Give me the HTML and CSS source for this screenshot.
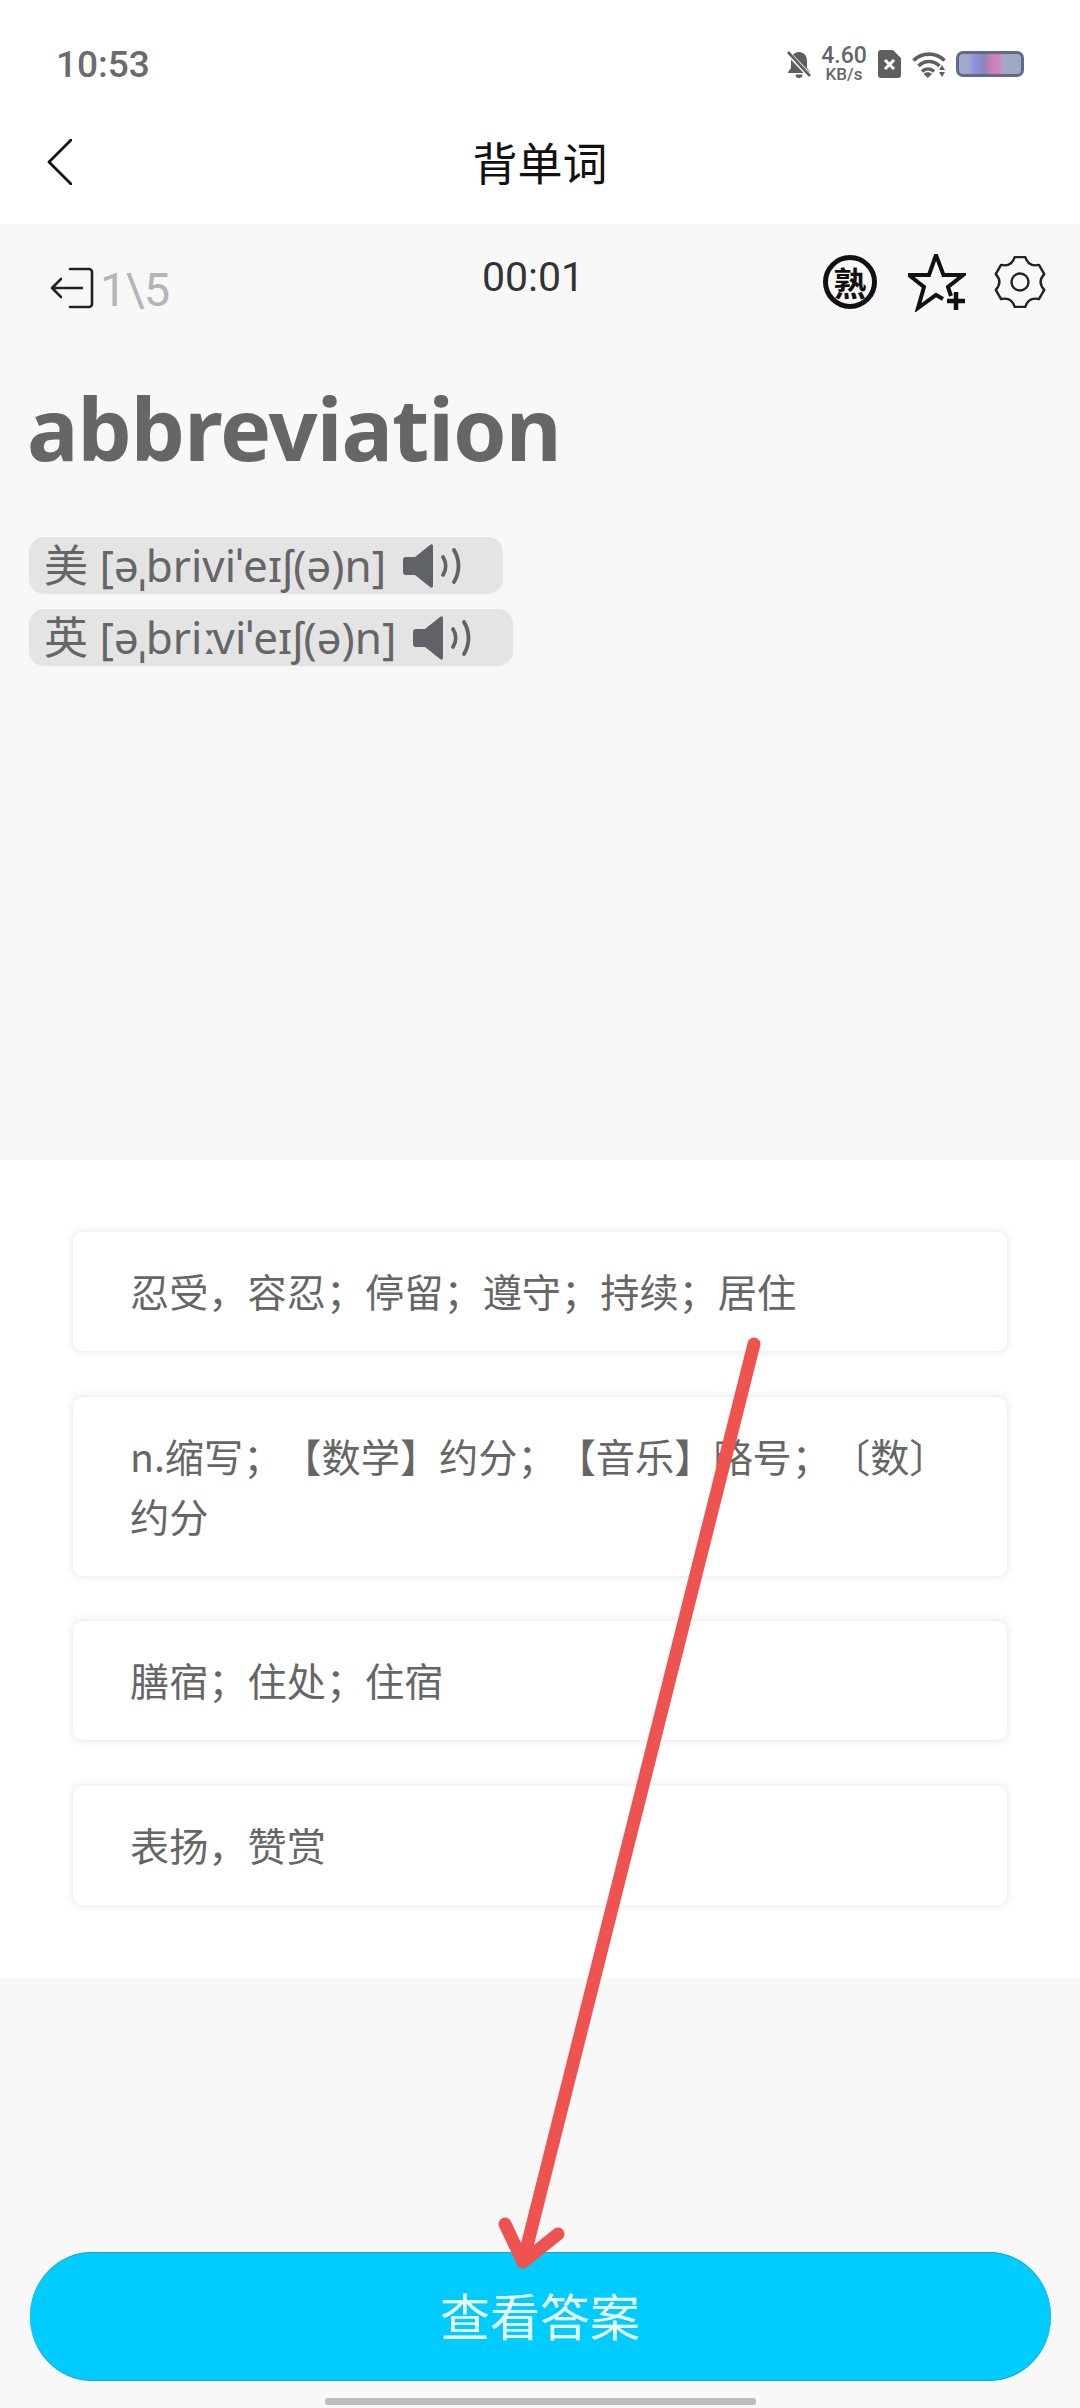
FILE: index.html
```html
<!DOCTYPE html>
<html lang="zh">
<head>
<meta charset="utf-8">
<title>背单词</title>
<link rel="stylesheet" href="styles.css">
</head>
<body>
<div class="page">
  <div class="status">
    <span class="time">10:53</span>
    <div class="status-icons">
      <svg class="i-bell" viewBox="0 0 24 27"><path d="M12 1c-5 0-8 4-8 9v7l-3 4v1h22v-1l-3-4v-7c0-5-3-9-8-9z M8.500 23.500h7a3.500 3.500 0 0 1-7 0z" fill="#5f5f5f"/><path d="M1 2l22 23" stroke="#fff" stroke-width="5"/><path d="M1 1l22 24" stroke="#5f5f5f" stroke-width="2.600"/></svg>
      <div class="speed"><span class="speed-num">4.60</span><span class="speed-unit">KB/s</span></div>
      <svg class="i-sim" viewBox="0 0 23 28"><path d="M3 0h11a2 2 0 0 1 1.500.6l6.900 7a2 2 0 0 1 .6 1.400v16a3 3 0 0 1-3 3H3a3 3 0 0 1-3-3V3a3 3 0 0 1 3-3z" fill="#5f5f5f"/><path d="M7 10l9 9M16 10l-9 9" stroke="#fff" stroke-width="3"/></svg>
      <svg class="i-wifi" viewBox="0 0 34 27"><path d="M1.500 9.500C10 1 24 1 32.500 9.500" fill="none" stroke="#5f5f5f" stroke-width="3.600"/><path d="M6.500 15c6-6 15-6 21 0" fill="none" stroke="#5f5f5f" stroke-width="3.600"/><path d="M11 20.500c3.500-3.500 8.500-3.500 12 0" fill="none" stroke="#5f5f5f" stroke-width="3.400" transform="translate(-1 0)"/><path d="M11.500 23c2.500-2.200 6-2.200 8.500 0l-4.200 4z" fill="#5f5f5f"/><path d="M30 14l3 5h-6zM27 21h6l-3 5z" fill="#5f5f5f"/></svg>
      <div class="battery"></div>
    </div>
  </div>

  <div class="nav">
    <svg class="i-back" viewBox="0 0 25 46"><path d="M24 1L2 23l22 22" fill="none" stroke="#111" stroke-width="2.800" stroke-linecap="round" stroke-linejoin="round"/></svg>
    <h1 class="title">背单词</h1>
  </div>

  <section class="study">
    <div class="tools">
      <div class="progress">
        <svg class="i-exit" viewBox="0 0 44 42"><path d="M20 2h19a3 3 0 0 1 3 3v32a3 3 0 0 1-3 3H20M32 21H2M11 12l-9 9 9 9" fill="none" stroke="#222" stroke-width="2.600" stroke-linecap="round" stroke-linejoin="round"/></svg>
        <span class="count">1\5</span>
      </div>
      <span class="timer">00:01</span>
      <div class="actions">
        <span class="known">熟</span>
        <svg class="i-star" viewBox="0 0 58 58"><path d="M35 45L28 41L10 54L16 33L1 21H21L28 1L35.500 21H55L40 33L43 42" fill="none" stroke="#111" stroke-width="4" stroke-linejoin="miter"/><path d="M48 38v18M39 47h18" stroke="#111" stroke-width="4.500" fill="none"/></svg>
        <svg class="i-gear" viewBox="-27 -27 54 54"><path d="M-5.300-24.900H5.300Q8.500-14.700 18.950-17.060L24.250-7.880Q17 0 24.250 7.880L18.950 17.060Q8.500 14.700 5.300 24.900H-5.300Q-8.500 14.700-18.950 17.060L-24.250 7.880Q-17 0-24.250-7.880L-18.950-17.060Q-8.500-14.700-5.300-24.900Z" fill="none" stroke="#222" stroke-width="2.400" stroke-linejoin="round"/><circle r="8.500" fill="none" stroke="#222" stroke-width="2.400"/></svg>
      </div>
    </div>
    <h2 class="word">abbreviation</h2>
    <div class="phonetics">
      <div class="pill">
        <span class="pill-text">美 [əˌbriviˈeɪʃ(ə)n]</span>
        <svg class="i-speaker" viewBox="0 0 58 46"><path d="M3 14h9L27 2c2-1.500 3-.5 3 1.500v39c0 2-1 3-3 1.500L12 32H3a3 3 0 0 1-3-3V17a3 3 0 0 1 3-3z" fill="#5f6368"/><path d="M40 14c3.500 5.500 3.500 12.500 0 18M51 7c6 10 6 22 0 32" fill="none" stroke="#5f6368" stroke-width="3.800" stroke-linecap="round"/></svg>
      </div>
      <div class="pill">
        <span class="pill-text">英 [əˌbri<span class="length">ː</span>viˈeɪʃ(ə)n]</span>
        <svg class="i-speaker" viewBox="0 0 58 46"><path d="M3 14h9L27 2c2-1.500 3-.5 3 1.500v39c0 2-1 3-3 1.500L12 32H3a3 3 0 0 1-3-3V17a3 3 0 0 1 3-3z" fill="#5f6368"/><path d="M40 14c3.500 5.500 3.500 12.500 0 18M51 7c6 10 6 22 0 32" fill="none" stroke="#5f6368" stroke-width="3.800" stroke-linecap="round"/></svg>
      </div>
    </div>
  </section>

  <section class="options">
    <div class="card">忍受，容忍；停留；遵守；持续；居住</div>
    <div class="card">n.缩写；【数学】约分；【音乐】略号；〔数〕约分</div>
    <div class="card">膳宿；住处；住宿</div>
    <div class="card">表扬，赞赏</div>
  </section>

  <div class="footer">
    <button class="answer">查看答案</button>
    <div class="home-bar"></div>
  </div>

  <svg class="arrow" viewBox="0 0 1080 2408"><path d="M754 1344L523 2262M505 2224L523 2262L558 2234" fill="none" stroke="#ef5350" stroke-width="13" stroke-linecap="round" stroke-linejoin="round"/></svg>
</div>
</body>
</html>
```

FILE: styles.css
```css
* { box-sizing: border-box; }
html, body { margin: 0; padding: 0; }
body {
  background: #fff;
  font-family: "Noto Sans", "Noto Sans CJK SC", sans-serif;
  text-spacing-trim: space-all;
}
.page {
  position: relative;
  width: 1080px;
  height: 2408px;
  display: flex;
  flex-direction: column;
  overflow: hidden;
}

/* status bar */
.status {
  height: 96px;
  flex: none;
  display: flex;
  align-items: flex-start;
  justify-content: space-between;
  padding: 44px 56px 0 56px;
}
.time {
  font-family: Roboto, sans-serif;
  font-size: 37px;
  line-height: 42px;
  font-weight: 500;
  color: #6b6b6b;
}
.status-icons {
  display: flex;
  align-items: center;
  margin-top: 1px;
}
.i-bell { width: 24px; height: 27px; margin-right: 9px; }
.speed {
  width: 48px;
  display: flex;
  flex-direction: column;
  align-items: center;
  margin-right: 10px;
  font-family: Roboto, sans-serif;
  font-weight: 500;
  color: #666;
}
.speed-num { font-size: 23px; line-height: 21px; }
.speed-unit { font-size: 17px; line-height: 17px; }
.i-sim { width: 23px; height: 28px; margin-right: 11px; }
.i-wifi { width: 34px; height: 27px; margin-right: 10px; }
.battery {
  width: 68px;
  height: 26px;
  border: 3px solid #5f6b88;
  border-radius: 7px;
  background: linear-gradient(90deg, #a0a8cc 0%, #a0a8cc 14%, #8d8ee6 26%, #8e8cd8 32%, #8d83b8 40%, #d77cb8 56%, #c889b8 66%, #a0a8c8 72%, #a0a8c8 100%);
}

/* nav */
.nav {
  height: 128px;
  flex: none;
  display: flex;
  align-items: center;
  justify-content: center;
  position: relative;
}
.i-back {
  width: 25px;
  height: 46px;
  position: absolute;
  left: 47px;
  top: 43px;
}
.title {
  margin: 3px 0 0;
  font-family: "Noto Sans CJK SC", sans-serif;
  font-size: 45px;
  line-height: 60px;
  font-weight: 400;
  color: #111;
}

/* study area */
.study {
  height: 936px;
  flex: none;
  background: #f8f8f9;
  padding-top: 30px;
}
.tools {
  display: grid;
  grid-template-columns: 432px 100px 1fr;
  padding: 0 33px 0 50px;
  height: 56px;
}
.progress {
  display: flex;
  align-items: flex-start;
  padding-top: 13px;
}
.i-exit { width: 44px; height: 42px; flex: none; }
.count {
  font-family: Roboto, sans-serif;
  font-size: 47px;
  font-weight: 400;
  line-height: 46px;
  letter-spacing: -1px;
  color: #b5b5b9;
  margin-left: 6px;
}
.timer {
  font-family: Roboto, sans-serif;
  font-size: 41px;
  line-height: 46px;
  color: #333;
  white-space: nowrap;
}
.actions {
  display: flex;
  justify-content: flex-end;
  align-items: flex-start;
}
.known {
  width: 54px;
  height: 54px;
  border: 5px solid #111;
  border-radius: 50%;
  display: flex;
  align-items: center;
  justify-content: center;
  font-family: "Noto Sans CJK SC", sans-serif;
  font-size: 33px;
  font-weight: 700;
  color: #111;
  margin-top: 1px;
  margin-right: 31px;
}
.i-star { width: 58px; height: 58px; margin-right: 27px; }
.i-gear { width: 54px; height: 54px; margin-top: 1px; }
.word {
  margin: 63px 0 0 27px;
  font-family: "Noto Sans", sans-serif;
  font-size: 86px;
  line-height: 110px;
  font-weight: 700;
  color: #666;
  letter-spacing: -1px;
}
.phonetics {
  display: flex;
  flex-direction: column;
  align-items: flex-start;
  gap: 15px;
  margin: 54px 0 0 29px;
}
.pill {
  height: 57px;
  display: flex;
  align-items: center;
  padding: 0 42px 0 15px;
  background: #e4e4e5;
  border-radius: 15px;
  box-shadow: 0 2px 6px rgba(0, 0, 0, 0.02);
}
.pill-text {
  font-family: "Noto Sans", "Noto Sans CJK SC", sans-serif;
  font-size: 44px;
  line-height: 57px;
  color: #666;
  white-space: nowrap;
}
.length { letter-spacing: -4px; }
.i-speaker { width: 58px; height: 46px; margin-left: 17px; flex: none; }

/* options */
.options {
  height: 818px;
  flex: none;
  background: #fff;
  padding: 72px 73px 0 73px;
  display: flex;
  flex-direction: column;
  gap: 45.500px;
}
.card {
  min-height: 119px;
  padding: 28px 48px 31px 57px;
  background: #fff;
  border-radius: 9px;
  box-shadow: 0 0 9px rgba(70, 70, 100, 0.16);
  font-family: "Noto Sans CJK SC", sans-serif;
  font-size: 39.200px;
  line-height: 60px;
  color: #666;
}

/* footer */
.footer {
  flex: 1;
  background: #f8f8f9;
  display: flex;
  flex-direction: column;
  align-items: center;
  padding-top: 274px;
}
.answer {
  width: 1021px;
  height: 129px;
  flex: none;
  border: 0;
  border-radius: 62px / 64.500px;
  background: #00ccff;
  box-shadow: inset 0 1px 0 #18a9cf, inset 0 -1px 0 #18a9cf;
  color: #e8fbff;
  font-family: "Noto Sans CJK SC", sans-serif;
  font-size: 50px;
  padding: 0 0 5px;
}
.home-bar {
  width: 431px;
  height: 7px;
  margin-top: 17px;
  border-radius: 3px;
  background: #bcbcbc;
}

/* annotation arrow */
.arrow {
  position: absolute;
  left: 0;
  top: 0;
  width: 1080px;
  height: 2408px;
  pointer-events: none;
}
```
